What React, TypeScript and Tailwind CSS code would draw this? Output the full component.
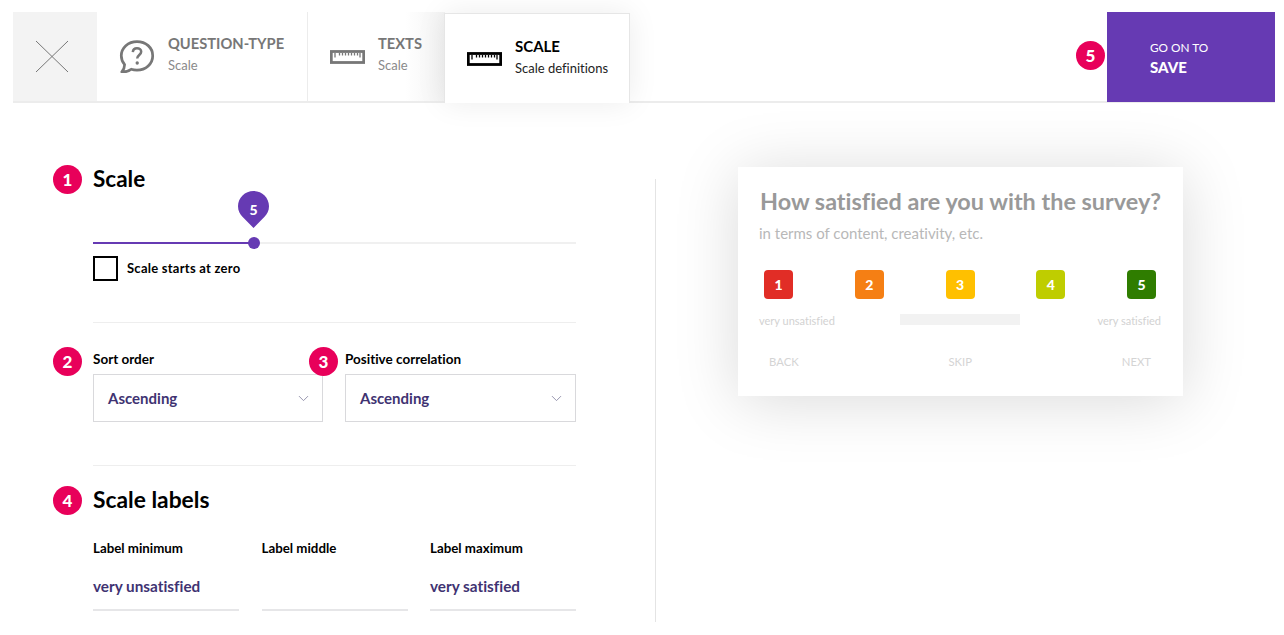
import React from "react";
import { ChevronDown } from "lucide-react";

const font = "font-['Lato','Noto_Sans',sans-serif] [font-variant-ligatures:none]";

function Badge({ n, className = "" }: { n: number; className?: string }) {
  return (
    <span className={`absolute flex h-[29px] w-[29px] items-center justify-center rounded-full bg-[#e8005a] text-[17px] font-black text-white ${className}`}>
      {n}
    </span>
  );
}

function Ruler({ color, className = "" }: { color: string; className?: string }) {
  return (
    <svg viewBox="0 0 35 14" width="35" height="14" className={className} fill="none">
      <rect x="1.300" y="1.500" width="32.400" height="11" stroke={color} strokeWidth="2.800" />
      <path d="M5 3v4.500M9.500 3v2.500M12.500 3v2.500M15.500 3v2.500M18.500 3v2.500M21.500 3v2.500M24.500 3v2.500M27.500 3v2.500M30 3v4.500" stroke={color} strokeWidth="1.300" />
    </svg>
  );
}

function Tab({ icon, title, sub, className = "", active = false, iconWidth }: { icon: React.ReactNode; title: string; sub: string; className?: string; active?: boolean; iconWidth: string }) {
  return (
    <div className={`flex ${className}`}>
      <div className={`flex shrink-0 items-center justify-center pl-[8px] ${iconWidth}`}>{icon}</div>
      <div className={`flex flex-col ${active ? "pt-[23px]" : "pt-[22px]"}`}>
        <span className={`font-bold leading-[18px] ${active ? "text-[15px] text-black" : "text-[14.700px] text-[#777777]"}`}>{title}</span>
        <span className={`mt-[4px] text-[13px] leading-[18px] ${active ? "text-[#222222]" : "text-[#8a8a8a]"}`}>{sub}</span>
      </div>
    </div>
  );
}

function Select() {
  return (
    <div className="flex h-[48px] items-center justify-between border border-[#d9d9dc] pl-[14px] pr-[10px]">
      <span className="text-[15px] font-bold text-[#3f3372]">Ascending</span>
      <ChevronDown size={17} strokeWidth={1.300} className="text-[#8f8da8]" />
    </div>
  );
}

function LabelField({ label, value }: { label: string; value: string }) {
  return (
    <div className="w-[146px]">
      <div className="text-[13.300px] font-bold leading-[18px] text-black">{label}</div>
      <div className="mt-[11px] h-[43px] border-b-2 border-[#e6e6e8] pt-[8px] text-[15.300px] font-bold leading-[20px] text-[#3f3372]">{value}</div>
    </div>
  );
}

const scale: [number, string][] = [
  [1, "bg-[#e12d26]"],
  [2, "bg-[#f57f14]"],
  [3, "bg-[#ffc000]"],
  [4, "bg-[#bfcd00]"],
  [5, "bg-[#2f7d00]"],
];

export default function App() {
  return (
    <div className={`${font} relative h-[635px] w-[1284px] overflow-hidden bg-white`}>
      {/* top bar */}
      <header className="ml-[13px] mr-[9px] mt-[12px] flex h-[91px] border-b-2 border-[#ececec]">
        <div className="flex w-[84px] items-center justify-center bg-[#f3f3f3] pr-[6px]">
          <svg width="34" height="33" viewBox="0 0 34 33" fill="none" stroke="#777" strokeWidth="1">
            <path d="M1 1l32 31M33 1L1 32" />
          </svg>
        </div>
        <Tab
          className="w-[211px] border-r border-[#ececec]"
          iconWidth="w-[71px]"
          title="QUESTION-TYPE"
          sub="Scale"
          icon={
            <svg width="36" height="33" viewBox="1.500 0.500 33 31.500" fill="none">
              <path d="M18 2C9.500 2 3 8 3 15.500c0 3.300 1.200 6.200 3.200 8.500 0 2.500-1 5-2.700 7 3.200.2 6.600-.8 9-2.600 1.800.6 3.600.8 5.500.8 8.500 0 15-6 15-13.700S26.500 2 18 2z" stroke="#777" strokeWidth="2.600" strokeLinejoin="round" />
              <path d="M14 12c.2-2.300 1.800-3.700 4-3.700 2.300 0 4 1.500 4 3.500 0 3-3.800 3.200-3.800 6.400" stroke="#777" strokeWidth="2.400" />
              <circle cx="18.200" cy="22.500" r="1.600" fill="#777" />
            </svg>
          }
        />
        <div className="relative w-[137px]">
          <div className="absolute inset-y-0 right-0 w-[40px] bg-gradient-to-r from-white to-[#f3f3f3]" />
          <Tab className="relative h-full w-full" iconWidth="w-[70px]" title="TEXTS" sub="Scale" icon={<Ruler color="#777777" />} />
        </div>
        <div className="relative z-10 mb-[-2px] mt-[1px] ml-[-1px] w-[186px] border-x border-t border-[#e6e6e6] bg-white shadow-[0_0_30px_rgba(0,0,0,0.08)]">
          <Tab active className="h-full" iconWidth="w-[70px]" title="SCALE" sub="Scale definitions" icon={<Ruler color="#000000" />} />
        </div>
        <div className="relative flex-1">
          <Badge n={5} className="right-[2px] top-[29px]" />
        </div>
        <div className="mb-[-1px] flex w-[168px] flex-col bg-[#663ab3] pl-[43px] pt-[28px] text-white">
          <span className="text-[11.800px] leading-[16px]">GO ON TO</span>
          <span className="mt-[1px] text-[15px] font-black leading-[20px]">SAVE</span>
        </div>
      </header>

      <main className="flex">
        {/* left column */}
        <div className="ml-[93px] w-[483px] shrink-0 pt-[60px]">
          <section className="relative h-[160px] border-b border-[#eeeeee]">
            <Badge n={1} className="left-[-40px] top-[2px]" />
            <h2 className="text-[22.500px] font-bold leading-[32px] text-black">Scale</h2>
            <div className="relative mt-[47px] h-[2px] bg-[#f0f0f0]">
              <div className="h-[2px] w-[161px] bg-[#663ab3]" />
              <span className="absolute left-[155px] top-[-5px] h-[12px] w-[12px] rounded-full bg-[#663ab3]" />
              <span className="absolute left-[145px] top-[-51px] flex h-[37px] w-[31px] justify-center">
                <svg className="absolute inset-0" width="31" height="37" viewBox="0 0 31 37">
                  <path d="M15.500 0C24 0 31 6.800 31 15.300c0 4.400-1.900 8-4.700 10.700L15.500 37 4.700 26C1.900 23.300 0 19.700 0 15.300 0 6.800 7 0 15.500 0z" fill="#663ab3" />
                </svg>
                <span className="relative pt-[10px] text-[14px] font-black leading-[18px] text-white">5</span>
              </span>
            </div>
            <label className="mt-[12px] flex items-center gap-[9px]">
              <span className="h-[25px] w-[25px] border-2 border-black" />
              <span className="text-[13px] font-bold tracking-[0.25px] text-black">Scale starts at zero</span>
            </label>
          </section>

          <section className="relative flex h-[143px] gap-[22px] border-b border-[#eeeeee] pt-[27px]">
            <Badge n={2} className="left-[-40px] top-[24px]" />
            <div className="w-[230px]">
              <div className="mb-[6px] text-[13.500px] font-bold leading-[18px] text-black">Sort order</div>
              <Select />
            </div>
            <div className="w-[231px]">
              <div className="mb-[6px] text-[13.500px] font-bold leading-[18px] text-black">Positive correlation</div>
              <Select />
            </div>
            <Badge n={3} className="left-[216px] top-[24px]" />
          </section>

          <section className="relative pt-[17px]">
            <Badge n={4} className="left-[-40px] top-[20px]" />
            <h2 className="text-[22.800px] font-bold leading-[32px] text-black">Scale labels</h2>
            <div className="mt-[24px] flex justify-between">
              <LabelField label="Label minimum" value="very unsatisfied" />
              <LabelField label="Label middle" value="" />
              <LabelField label="Label maximum" value="very satisfied" />
            </div>
          </section>
        </div>

        {/* divider */}
        <div className="ml-[79px] mt-[76px] h-[443px] w-px shrink-0 bg-[#e4e4e4]" />

        {/* preview */}
        <div className="ml-[82px] mt-[64px] h-[229px] w-[445px] shrink-0 bg-white pl-[21px] pr-[22px] pt-[19px] shadow-[0_5px_60px_rgba(0,0,0,0.15)]">
          <h3 className="whitespace-nowrap pl-[1px] text-[23.400px] font-bold leading-[30px] text-[#999999]">How satisfied are you with the survey?</h3>
          <p className="mt-[7px] text-[15px] leading-[20px] text-[#b8b8b8]">in terms of content, creativity, etc.</p>
          <div className="mt-[27px] flex justify-between pl-[5px] pr-[5px]">
            {scale.map(([n, c]) => (
              <span key={n} className={`flex h-[29px] w-[29px] items-center justify-center rounded-[4px] text-[14px] font-black text-white ${c}`}>
                {n}
              </span>
            ))}
          </div>
          <div className="mt-[14px] flex items-start justify-between text-[11px] leading-[16px] text-[#d2d2d2]">
            <span className="w-[120px]">very unsatisfied</span>
            <span className="mt-[1px] h-[11px] w-[120px] bg-[#f2f2f2]" />
            <span className="w-[120px] text-right">very satisfied</span>
          </div>
          <div className="mt-[25px] flex justify-between px-[10px] text-[11.300px] leading-[16px] text-[#d4d4d4]">
            <span>BACK</span>
            <span>SKIP</span>
            <span>NEXT</span>
          </div>
        </div>
      </main>
    </div>
  );
}
